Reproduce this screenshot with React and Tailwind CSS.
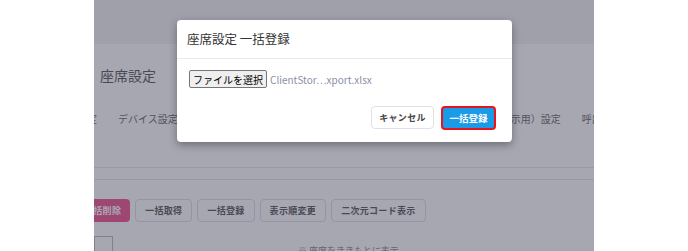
import React from "react";

const font = { fontFamily: '"Noto Sans CJK JP", "Noto Sans", sans-serif' };

function PageButton({ children, pink }) {
  return (
    <div
      className={
        pink
          ? "h-[23px] px-[9px] flex items-center rounded-[4px] bg-[#f0508f] text-white text-[9px] font-bold tracking-[0.3px] shrink-0"
          : "h-[23px] px-[9px] flex items-center rounded-[4px] border border-[#dcdce4] bg-white text-[#555] text-[9px] font-bold tracking-[0.3px] shrink-0"
      }
    >
      {children}
    </div>
  );
}

export default function App() {
  return (
    <div className="relative w-[688px] h-[251px] bg-white flex overflow-hidden" style={font}>
      <div className="w-[94px] shrink-0" />
      <div className="relative w-[500px] h-full overflow-hidden bg-white shrink-0">
        <div className="h-[44px] bg-[#f2f2f5]" />
        <div className="pl-[6px] pt-[21px] h-[68px] text-[14px] leading-[20px] text-[#555]">座席設定</div>
        <div className="flex items-center gap-[21px] h-[14px] -ml-[37px] text-[10px] leading-[14px] text-[#666] whitespace-nowrap">
          <span className="shrink-0">基本設定</span>
          <span className="shrink-0">デバイス設定</span>
          <span className="w-[231px] shrink-0 overflow-hidden">座席レイアウト設定</span>
          <span className="shrink-0">モニター（表示用）設定</span>
          <span className="shrink-0">呼出設定</span>
        </div>
        <div className="h-[42px] border-b border-[#e6e6ea]" />
        <div className="h-[12px] border-b border-[#e6e6ea]" />
        <div className="flex gap-[5px] mt-[19px] -ml-[19px]">
          <PageButton pink>一括削除</PageButton>
          <PageButton>一括取得</PageButton>
          <PageButton>一括登録</PageButton>
          <PageButton>表示順変更</PageButton>
          <PageButton>二次元コード表示</PageButton>
        </div>
        <div className="flex items-start mt-[14px]">
          <div className="w-[19px] h-[20px] border border-[#bbb] bg-white shrink-0" />
          <div className="ml-[185px] mt-[8px] text-[9px] text-[#888] whitespace-nowrap">※ 座席をききもとに表示</div>
        </div>
        <div className="absolute inset-0 bg-[rgba(60,60,82,0.45)]" />
      </div>

      <div className="absolute left-[177px] top-[20px] w-[335px] h-[122px] bg-white rounded-[4px] shadow-[0_3px_8px_rgba(0,0,0,0.35)] flex flex-col">
        <div className="h-[39px] border-b border-[#e9ecef] flex items-center pl-[10px] text-[12.5px] text-[#333]">
          座席設定 一括登録
        </div>
        <div className="flex items-center pl-[12px] mt-[11px] h-[18px]">
          <div className="h-[18px] px-[3px] flex items-center border border-[#767676] bg-[#efefef] rounded-[2px] text-[10px] text-black whitespace-nowrap">
            ファイルを選択
          </div>
          <span className="ml-[3px] text-[10px] text-[#8a8fa8] whitespace-nowrap">
            ClientStor⋯xport.xlsx
          </span>
        </div>
        <div className="flex justify-end gap-[7px] pr-[16px] mt-[18px]">
          <div className="w-[63px] h-[23px] flex items-center justify-center rounded-[4px] border border-[#dee2e6] bg-white text-[9px] font-bold tracking-[0.3px] text-[#444]">
            キャンセル
          </div>
          <div className="w-[55px] h-[24px] flex items-center justify-center rounded-[4px] border-2 border-[#e8141c] bg-[#1a9be8] text-[9.5px] font-bold text-white">
            一括登録
          </div>
        </div>
      </div>
    </div>
  );
}
